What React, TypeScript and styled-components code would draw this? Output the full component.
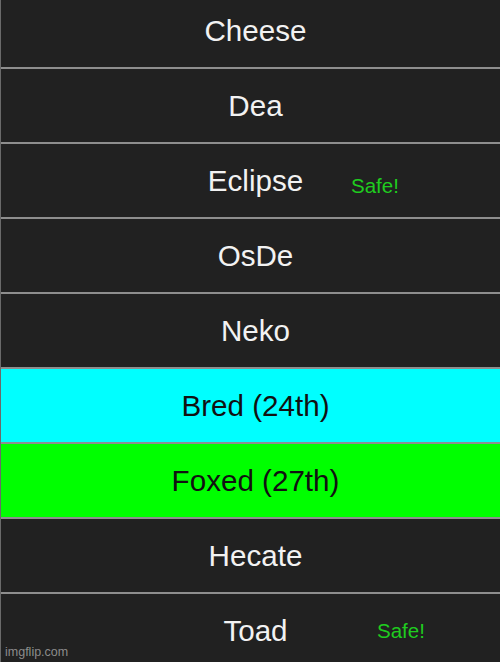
import React from "react";
import styled, { createGlobalStyle } from "styled-components";

const Global = createGlobalStyle`
  html, body { margin: 0; padding: 0; background: #212121; overflow: hidden; }
  body { font-family: "Liberation Sans", Arial, sans-serif; }
`;

const Frame = styled.div`
  position: relative;
  width: 500px;
  height: 662px;
  overflow: hidden;
  background: #212121;
  border-left: 1px solid #6a6a6a;
  box-sizing: border-box;
`;

const Table = styled.div`
  display: flex;
  flex-direction: column;
  margin-top: -6px;
`;

const Row = styled.div<{ $bg?: string; $dark?: boolean }>`
  position: relative;
  height: 73px;
  display: flex;
  align-items: center;
  justify-content: center;
  padding-left: 10px;
  padding-top: 1px;
  box-sizing: border-box;
  background: ${(p) => p.$bg || "#212121"};
  color: ${(p) => (p.$dark ? "#111" : "#f2f2f2")};
  font-size: 29.6px;
  & + & {
    border-top: 2px solid #8e8e8e;
    height: 75px;
  }
`;

const Safe = styled.span<{ $left: number; $top: number }>`
  position: absolute;
  left: ${(p) => p.$left}px;
  top: ${(p) => p.$top}px;
  font-size: 20.5px;
  line-height: 1;
  color: #1fcc1f;
`;

const Watermark = styled.div`
  position: absolute;
  left: 4px;
  bottom: 3px;
  font-size: 12.5px;
  color: rgba(200, 200, 200, 0.65);
`;

const rows: {
  name: string;
  bg?: string;
  dark?: boolean;
  safe?: { left: number; top: number };
}[] = [
  { name: "Cheese" },
  { name: "Dea" },
  { name: "Eclipse", safe: { left: 350, top: 32 } },
  { name: "OsDe" },
  { name: "Neko" },
  { name: "Bred (24th)", bg: "#00ffff", dark: true },
  { name: "Foxed (27th)", bg: "#00ff00", dark: true },
  { name: "Hecate" },
  { name: "Toad", safe: { left: 376, top: 27 } },
];

export default function App() {
  return (
    <Frame>
      <Global />
      <Table>
        {rows.map((r) => (
          <Row key={r.name} $bg={r.bg} $dark={r.dark}>
            {r.name}
            {r.safe && (
              <Safe $left={r.safe.left} $top={r.safe.top}>
                Safe!
              </Safe>
            )}
          </Row>
        ))}
      </Table>
      <Watermark>imgflip.com</Watermark>
    </Frame>
  );
}
